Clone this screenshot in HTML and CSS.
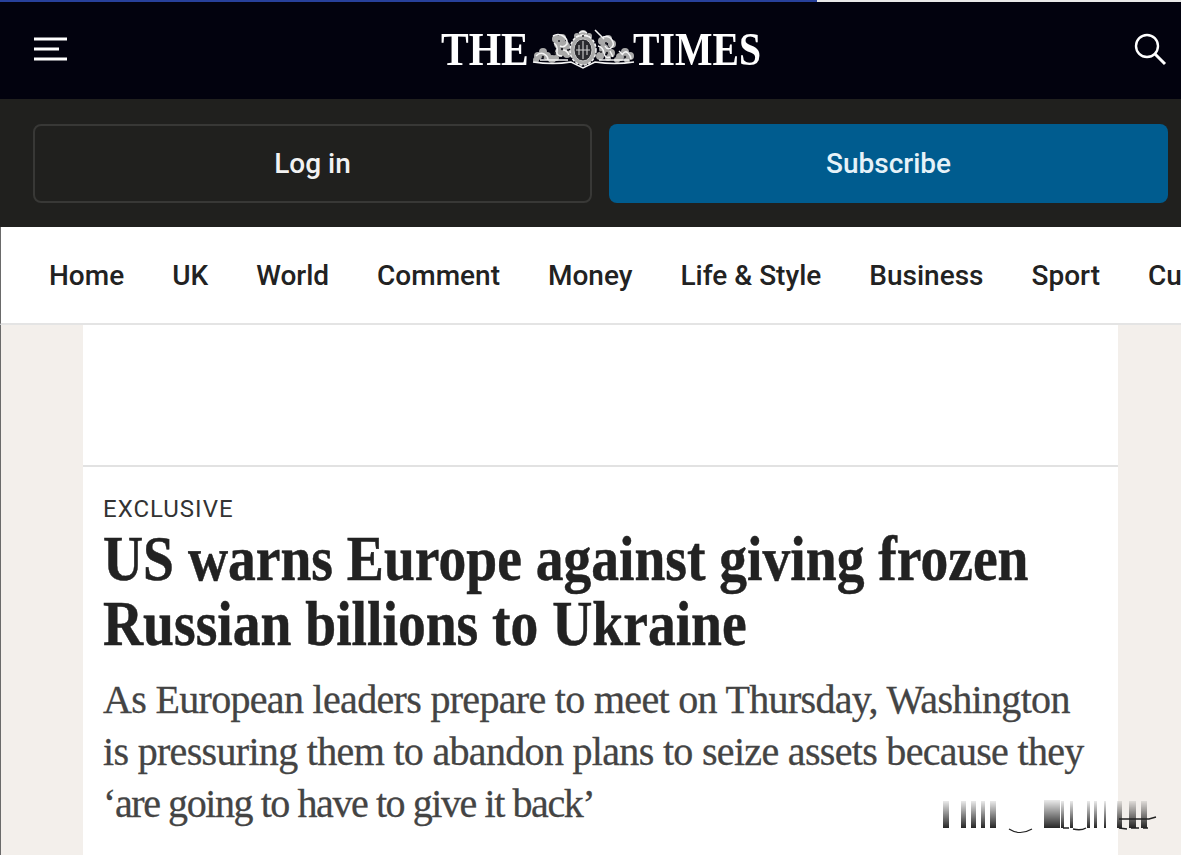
FILE: index.html
```html
<!DOCTYPE html>
<html lang="en">
<head>
<meta charset="utf-8">
<title>The Times</title>
<link rel="stylesheet" href="styles.css">
</head>
<body>
<div class="progress"><div class="progress-fill"></div></div>
<header class="masthead">
  <svg class="menu-icon" width="35" height="26" viewBox="0 0 35 26"><path d="M1 3h33M1 13h25M1 23h33" stroke="#fff" stroke-width="3" fill="none"/></svg>
  <div class="logo">
    <span class="logo-word logo-the">THE</span>
    <svg class="crest" width="103" height="40" viewBox="0 0 103 40">
      <defs><filter id="soft" x="-5%" y="-5%" width="110%" height="110%"><feGaussianBlur stdDeviation="0.45"/></filter></defs>
      <g filter="url(#soft)">
        <g fill="#a9a9a9">
          <circle cx="6" cy="27" r="4"/><circle cx="11" cy="23" r="4"/><circle cx="15" cy="27" r="4"/><circle cx="4" cy="31" r="3"/><circle cx="20" cy="30" r="4"/>
          <circle cx="24" cy="10" r="4"/><circle cx="30" cy="9" r="4"/><circle cx="27" cy="15" r="5"/><circle cx="33" cy="17" r="5"/><circle cx="28" cy="23" r="5"/><circle cx="35" cy="25" r="4"/><circle cx="24" cy="29" r="3"/>
          <ellipse cx="51" cy="21" rx="13" ry="15"/>
          <circle cx="45" cy="7" r="3"/><circle cx="51" cy="5" r="4"/><circle cx="57" cy="7" r="3"/>
          <circle cx="70" cy="12" r="4"/><circle cx="76" cy="10" r="4"/><circle cx="80" cy="15" r="4"/><circle cx="72" cy="20" r="5"/><circle cx="79" cy="24" r="4"/><circle cx="68" cy="27" r="4"/><circle cx="76" cy="29" r="3"/>
          <circle cx="88" cy="28" r="4"/><circle cx="93" cy="23" r="4"/><circle cx="98" cy="27" r="4"/><circle cx="95" cy="31" r="3"/><circle cx="85" cy="31" r="3"/>
        </g>
        <g fill="none" stroke="#f4f4f4" stroke-width="1.5">
          <ellipse cx="51" cy="21" rx="13" ry="15" stroke-dasharray="3 1.5"/>
          <path d="M47 4q4-3 8 0M44 8q7-3 14 0"/>
          <path d="M1 33q20 3 38 0l12 6 12-6q20 3 39 0"/>
          <path d="M21 7q5-3 10 0t4 8q-3 4-7 2M22 14q4 3 3 8t5 5M31 21q4 0 6 5M4 27q4-4 8-2t4 6M8 31h28"/>
          <path d="M63 1l9 9M71 8q6-2 9 3t-1 8q-4 2-6-2M66 17q5 1 6 7t6 4M78 22l3 6M67 31h30M90 26q3-5 6-2t3 6M87 22l3 3"/>
        </g>
        <ellipse cx="51" cy="21" rx="9" ry="11" fill="#2b2b2f"/>
        <ellipse cx="51" cy="21" rx="9" ry="11" fill="none" stroke="#c8c8c8" stroke-width="1"/>
        <path d="M51 12v18M44 21h14M47 16v10M55 16v10" stroke="#cfcfcf" stroke-width="1.1" fill="none"/>
        <g fill="#222226">
          <circle cx="27" cy="12" r="1"/><circle cx="30" cy="20" r="1.2"/><circle cx="23" cy="24" r="1"/><circle cx="36" cy="21" r="1"/><circle cx="11" cy="28" r="1.2"/><circle cx="74" cy="14" r="1"/><circle cx="75" cy="24" r="1.2"/><circle cx="69" cy="23" r="1"/><circle cx="93" cy="28" r="1.2"/><circle cx="51" cy="7" r="1"/>
        </g>
      </g>
    </svg>
    <span class="logo-word logo-times">TIMES</span>
  </div>
  <svg class="search-icon" width="34" height="34" viewBox="0 0 34 34"><circle cx="14" cy="14" r="11" stroke="#fff" stroke-width="2.4" fill="none"/><path d="M22 22l10 10" stroke="#fff" stroke-width="3" fill="none"/></svg>
</header>
<div class="actions">
  <a class="btn btn-login">Log in</a>
  <a class="btn btn-subscribe">Subscribe</a>
</div>
<nav class="nav">
  <a>Home</a><a>UK</a><a>World</a><a>Comment</a><a>Money</a><a>Life &amp; Style</a><a>Business</a><a>Sport</a><a>Culture</a>
</nav>
<main class="page">
  <article class="sheet">
    <div class="ad-slot"></div>
    <div class="story">
      <p class="label">EXCLUSIVE</p>
      <h1 class="headline">US warns Europe against giving frozen Russian billions to Ukraine</h1>
      <p class="standfirst">As European leaders prepare to meet on Thursday, Washington is pressuring them to abandon plans to seize assets because they <span class="standfirst-end">‘are going to have to give it back’</span></p>
    </div>
  </article>
  <svg class="watermark" width="222" height="40" viewBox="0 0 222 40">
    <defs>
      <linearGradient id="fade" x1="0" y1="0" x2="0" y2="1"><stop offset="0" stop-color="#000" stop-opacity=".08"/><stop offset="1" stop-color="#000" stop-opacity=".85"/></linearGradient>
      <filter id="wm-soft"><feGaussianBlur stdDeviation="0.6"/></filter>
    </defs>
    <g fill="url(#fade)" filter="url(#wm-soft)">
      <rect x="4" y="6" width="6" height="27"/><rect x="22" y="6" width="5" height="27"/><rect x="32" y="6" width="5" height="27"/><rect x="42" y="6" width="4" height="27"/><rect x="51" y="6" width="6" height="27"/>
      <rect x="105" y="5" width="16" height="28"/><rect x="122" y="6" width="3" height="27"/><rect x="131" y="6" width="3" height="27"/><rect x="148" y="6" width="3" height="27"/><rect x="155" y="6" width="3" height="27"/><rect x="165" y="6" width="2" height="27"/><rect x="178" y="6" width="5" height="27"/><rect x="190" y="6" width="7" height="27"/><rect x="202" y="6" width="6" height="27"/>
    </g>
    <path d="M70 34q11 7 23 0" stroke="#222" stroke-width="1.2" fill="none"/>
    <path d="M60 24h150" stroke="#555" stroke-opacity=".3" stroke-width="1.4" fill="none" filter="url(#wm-soft)"/>
    <path d="M180 24h30l7-2" stroke="#222" stroke-width="1.4" fill="none"/>
    <path d="M124 33h6M134 34q8 2 13-1M180 33l8 1M192 33h8M204 33h5" stroke="#222" stroke-width="1.4" fill="none"/>
  </svg>
</main>
</body>
</html>
```
FILE: styles.css
```css
* { box-sizing: border-box; }
html, body { margin: 0; height: 855px; overflow: hidden; }
body { background: #f3efeb; font-family: Roboto, "Liberation Sans", sans-serif; }
.progress { height: 2px; background: #e8e8e8; }
.progress-fill { width: 817px; height: 2px; background: #27409a; }
.masthead { height: 97px; background: #02020e; display: flex; align-items: center; padding: 0 14px 0 33px; }
.menu-icon { margin-top: -4px; flex: none; }
.search-icon { margin: -3px 0 0 auto; flex: none; }
.logo { margin: -3px 0 0 373px; display: flex; align-items: center; color: #fff; font-family: "Liberation Serif", serif; font-weight: 700; font-size: 47px; line-height: 44px; height: 44px; }
.logo-word { display: block; flex: none; transform-origin: left center; white-space: nowrap; }
.logo-the { width: 86px; transform: scaleX(.885); }
.logo-times { width: 127px; margin-left: -2px; transform: scaleX(.845); }
.crest { flex: none; margin-left: 5px; }
.actions { height: 128px; background: #20201e; display: grid; grid-template-columns: 1fr 1fr; gap: 17px; padding: 25px 13px 24px 33px; }
.btn { display: flex; align-items: center; justify-content: center; border-radius: 8px; color: #fff; font-size: 28px; font-weight: 500; }
.btn-login { border: 2px solid #383836; color: #f2f2f2; }
.btn-subscribe { background: #005c8f; color: #e6f2f8; }
.nav { height: 98px; background: #fff; border-bottom: 2px solid #e4e4e4; border-left: 1px solid #6a6a6a; display: flex; align-items: center; gap: 48px; padding: 0 0 0 48px; overflow: hidden; white-space: nowrap; font-size: 28px; font-weight: 500; color: #222; }
.page { position: relative; height: 530px; border-left: 1px solid #6a6a6a; padding-left: 82px; }
.sheet { width: 1035px; height: 530px; background: #fff; }
.ad-slot { height: 142px; border-bottom: 2px solid #e2e2e2; }
.story { padding: 27px 20px 0; }
.label { margin: 0; font-size: 24px; line-height: 30px; letter-spacing: 1px; color: #333; }
.headline { margin: 2px 0 0; width: 1146px; transform: scaleX(.868); transform-origin: left top; font-family: "Liberation Serif", serif; font-weight: 700; font-size: 64px; line-height: 65px; -webkit-text-stroke: .5px #222; color: #222; }
.standfirst { margin: 18px 0 0; max-width: 985px; font-family: "Liberation Serif", serif; font-size: 40px; line-height: 52px; letter-spacing: -.68px; -webkit-text-stroke: .3px #444; color: #444; }
.standfirst-end { letter-spacing: -1.42px; }
.watermark { position: absolute; left: 938px; top: 470px; }
```
